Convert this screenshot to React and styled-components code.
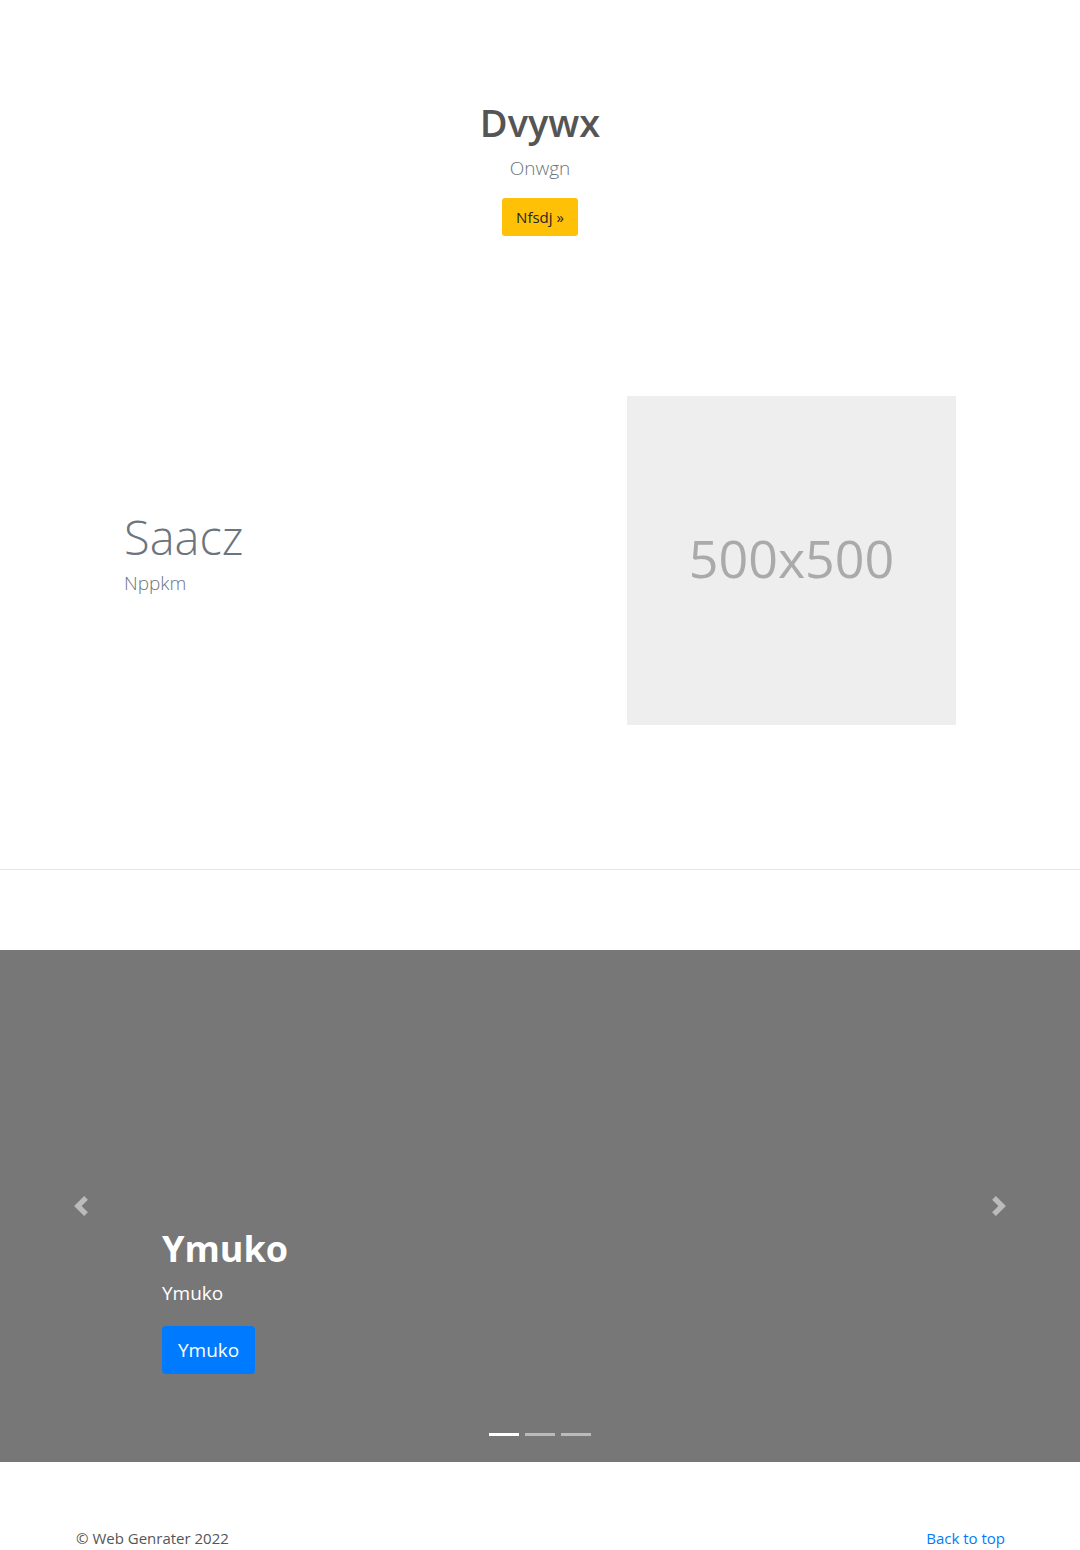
import React from 'react';
import styled, { createGlobalStyle } from 'styled-components';

const GlobalStyle = createGlobalStyle`
  body {
    margin: 0;
    background: #fff;
    font-family: "Open Sans", "Noto Sans", sans-serif;
    color: #555;
  }
  * { box-sizing: border-box; }
`;

const Page = styled.div`
  width: 1080px;
  height: 1550px;
  overflow: hidden;
`;

const Hero = styled.section`
  padding-top: 98px;
  display: flex;
  flex-direction: column;
  align-items: center;
  text-align: center;
`;

const HeroTitle = styled.h1`
  margin: 0 0 7px;
  font-size: 38px;
  line-height: 48px;
  font-weight: 600;
  color: #555;
`;

const Lead = styled.p`
  margin: 0 0 15px;
  font-size: 19px;
  line-height: 30px;
  font-weight: 300;
  color: ${(p) => p.$color || '#6c757d'};
`;

const Button = styled.a`
  display: inline-flex;
  align-items: center;
  justify-content: center;
  height: ${(p) => (p.$large ? '48px' : '38px')};
  padding: 0 ${(p) => (p.$large ? '16px' : '14px')};
  border-radius: ${(p) => (p.$large ? '4px' : '3px')};
  background: ${(p) => p.$bg};
  color: ${(p) => p.$fg};
  font-size: ${(p) => (p.$large ? '19px' : '15px')};
  text-decoration: none;
`;

const Feature = styled.section`
  margin-top: 160px;
  padding: 0 124px;
  display: flex;
  align-items: center;
  justify-content: space-between;
`;

const FeatureText = styled.div`
  display: flex;
  flex-direction: column;
`;

const FeatureTitle = styled.h2`
  margin: 0 0 2px;
  font-size: 47px;
  line-height: 58px;
  font-weight: 300;
  color: #6c757d;
`;

const Placeholder = styled.div`
  width: 329px;
  height: 329px;
  background: #eee;
  display: flex;
  align-items: center;
  justify-content: center;
  color: #aaa;
  font-size: 52px;
  padding-bottom: 6px;
`;

const Divider = styled.hr`
  margin: 144px 0 0;
  border: 0;
  border-top: 1px solid #e5e5e5;
`;

const Carousel = styled.section`
  position: relative;
  margin-top: 80px;
  height: 512px;
  background: #777;
`;

const Control = styled.div`
  position: absolute;
  top: 0;
  bottom: 0;
  ${(p) => (p.$side === 'left' ? 'left: 0;' : 'right: 0;')}
  width: 162px;
  display: flex;
  align-items: center;
  justify-content: center;
  opacity: 0.5;
`;

const Caption = styled.div`
  position: absolute;
  left: 162px;
  top: 275px;
  color: #fff;
`;

const CaptionTitle = styled.h1`
  margin: 0 0 5px;
  font-size: 36px;
  line-height: 48px;
  font-weight: 700;
`;

const CaptionText = styled.p`
  margin: 0 0 18px;
  font-size: 19px;
  line-height: 30px;
`;

const Indicators = styled.ol`
  position: absolute;
  left: 0;
  right: 0;
  bottom: 26px;
  margin: 0;
  padding: 0;
  list-style: none;
  display: flex;
  justify-content: center;
  gap: 6px;
`;

const Indicator = styled.li`
  width: 30px;
  height: 3px;
  background: #fff;
  opacity: ${(p) => (p.$active ? 1 : 0.5)};
`;

const Footer = styled.footer`
  padding: 64px 75px 0 76px;
  display: flex;
  justify-content: space-between;
  font-size: 15px;
  line-height: 24px;
  color: #555;
`;

const TopLink = styled.a`
  color: #007bff;
  text-decoration: none;
`;

const Chevron = ({ dir }) => (
  <svg width="20" height="20" viewBox="0 0 8 8" fill="#fff">
    {dir === 'left' ? (
      <path d="M5.25 0l-4 4 4 4 1.5-1.5L4.25 4l2.5-2.5L5.25 0z" />
    ) : (
      <path d="M2.75 0l-1.5 1.5L3.75 4l-2.5 2.5L2.75 8l4-4-4-4z" />
    )}
  </svg>
);

export default function App() {
  return (
    <Page>
      <GlobalStyle />
      <Hero>
        <HeroTitle>Dvywx</HeroTitle>
        <Lead>Onwgn</Lead>
        <Button href="#" $bg="#ffc107" $fg="#212529">Nfsdj »</Button>
      </Hero>

      <Feature>
        <FeatureText>
          <FeatureTitle>Saacz</FeatureTitle>
          <Lead>Nppkm</Lead>
        </FeatureText>
        <Placeholder>500x500</Placeholder>
      </Feature>

      <Divider />

      <Carousel>
        <Control $side="left"><Chevron dir="left" /></Control>
        <Caption>
          <CaptionTitle>Ymuko</CaptionTitle>
          <CaptionText>Ymuko</CaptionText>
          <Button href="#" $large $bg="#007bff" $fg="#fff">Ymuko</Button>
        </Caption>
        <Control $side="right"><Chevron dir="right" /></Control>
        <Indicators>
          <Indicator $active />
          <Indicator />
          <Indicator />
        </Indicators>
      </Carousel>

      <Footer>
        <span>© Web Genrater 2022</span>
        <TopLink href="#">Back to top</TopLink>
      </Footer>
    </Page>
  );
}
